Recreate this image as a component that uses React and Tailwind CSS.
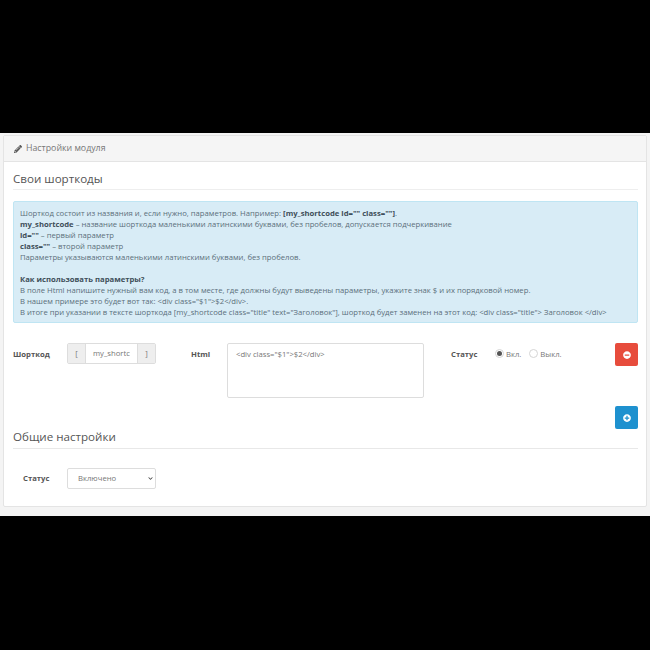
import { FaPencilAlt, FaMinusCircle, FaPlusCircle, FaChevronDown } from "react-icons/fa";

function Radio({ checked, label }) {
  return (
    <span className="flex items-center gap-[2px]">
      <span className="w-[9px] h-[9px] rounded-full border border-[#d5d5d5] bg-white flex items-center justify-center">
        {checked && <span className="w-[5px] h-[5px] rounded-full bg-[#555]" />}
      </span>
      <span className="text-[7.7px] mt-[3px] text-[#777]">{label}</span>
    </span>
  );
}

function App() {
  return (
    <div className="w-[650px] h-[650px] bg-black flex flex-col font-['Open_Sans',sans-serif] text-[#666]">
      <div className="h-[133px] shrink-0" />
      <div className="h-[383px] shrink-0 bg-[#f4f4f4] px-[3px] pt-[2px]">
        <div className="h-[372px] bg-white border border-[#e4e4e4] rounded-[2px]">
          <div className="h-[26px] bg-[#f5f5f5] border-b border-[#e4e4e4] flex items-center gap-[4px] pl-[10px] pt-[1px]">
            <FaPencilAlt className="text-[#555] w-[8px] h-[8px]" />
            <span className="text-[8.8px] text-[#777]">Настройки модуля</span>
          </div>

          <div className="pl-[9px] pr-[8px]">
            <div className="mt-[9px] h-[19px] border-b border-[#eeeeee] text-[11.6px] leading-[16px] text-[#555]">Свои шорткоды</div>

            <div className="mt-[11px] h-[122px] bg-[#d8ecf6] border border-[#bfe5f3] rounded-[2px] px-[6px] pt-[6px] text-[7.7px] leading-[11px] text-[#5b6f7b] whitespace-nowrap">
              <div>Шорткод состоит из названия и, если нужно, параметров. Например: <b className="text-[#3f4f5a]">[my_shortcode id="" class=""]</b>.</div>
              <div><b className="text-[#3f4f5a]">my_shortcode</b> – название шорткода маленькими латинскими буквами, без пробелов, допускается подчеркивание</div>
              <div><b className="text-[#3f4f5a]">id=""</b> – первый параметр</div>
              <div><b className="text-[#3f4f5a]">class=""</b> – второй параметр</div>
              <div>Параметры указываются маленькими латинскими буквами, без пробелов.</div>
              <div className="mt-[11px]"><b className="text-[#3f4f5a]">Как использовать параметры?</b></div>
              <div>В поле Html напишите нужный вам код, а в том месте, где должны будут выведены параметры, укажите знак $ и их порядковой номер.</div>
              <div>В нашем примере это будет вот так: &lt;div class="$1"&gt;$2&lt;/div&gt;.</div>
              <div>В итоге при указании в тексте шорткода [my_shortcode class="title" text="Заголовок"], шорткод будет заменен на этот код: &lt;div class="title"&gt; Заголовок &lt;/div&gt;</div>
            </div>

            <div className="mt-[20px] flex items-start h-[55px]">
              <div className="w-[54px] text-[7.7px] font-bold leading-[22px] text-[#555]">Шорткод</div>
              <div className="flex h-[21px] w-[89px] border border-[#dddddd] rounded-[2px] text-[7.7px]">
                <span className="w-[18px] bg-[#eeeeee] border-r border-[#dddddd] flex items-center justify-center text-[#777]">[</span>
                <input readOnly value="my_shortcode" className="w-[51px] bg-white pl-[7px] pr-[7px] outline-none text-[#777]" />
                <span className="flex-1 bg-[#eeeeee] border-l border-[#dddddd] flex items-center justify-center text-[#777]">]</span>
              </div>
              <div className="ml-[35px] w-[36px] text-[7.7px] font-bold leading-[22px] text-[#555]">Html</div>
              <textarea readOnly value={'<div class="$1">$2</div>'} className="w-[197px] h-[55px] border border-[#dddddd] rounded-[2px] px-[8px] py-[5px] text-[7.7px] leading-[11px] text-[#777] resize-none outline-none" />
              <div className="ml-[27px] w-[44px] text-[7.7px] font-bold leading-[22px] text-[#555]">Статус</div>
              <div className="flex gap-[8px] h-[21px] items-center">
                <Radio checked label="Вкл." />
                <Radio label="Выкл." />
              </div>
              <button className="ml-auto w-[23px] h-[23px] bg-[#e74c3c] rounded-[2px] flex items-center justify-center">
                <FaMinusCircle className="text-white w-[8px] h-[8px]" />
              </button>
            </div>

            <div className="mt-[8px] flex justify-end">
              <button className="w-[23px] h-[23px] bg-[#1e91cf] rounded-[2px] flex items-center justify-center">
                <FaPlusCircle className="text-white w-[8px] h-[8px]" />
              </button>
            </div>

            <div className="h-[20px] border-b border-[#e8e8e8] text-[11.6px] leading-[16px] text-[#555]">Общие настройки</div>

            <div className="mt-[19px] flex items-center">
              <div className="w-[54px] pl-[10px] text-[7.7px] font-bold text-[#555]">Статус</div>
              <div className="relative w-[89px] h-[21px]">
                <select defaultValue="on" className="block appearance-none w-full h-full border border-[#dddddd] rounded-[2px] bg-white pl-[10px] text-[7.7px] text-[#777] outline-none">
                  <option value="on">Включено</option>
                  <option value="off">Выключено</option>
                </select>
                <FaChevronDown className="absolute right-[3px] top-[8px] w-[5px] h-[5px] text-[#444]" />
              </div>
            </div>
          </div>
        </div>
      </div>
      <div className="flex-1" />
    </div>
  );
}

export default App;
